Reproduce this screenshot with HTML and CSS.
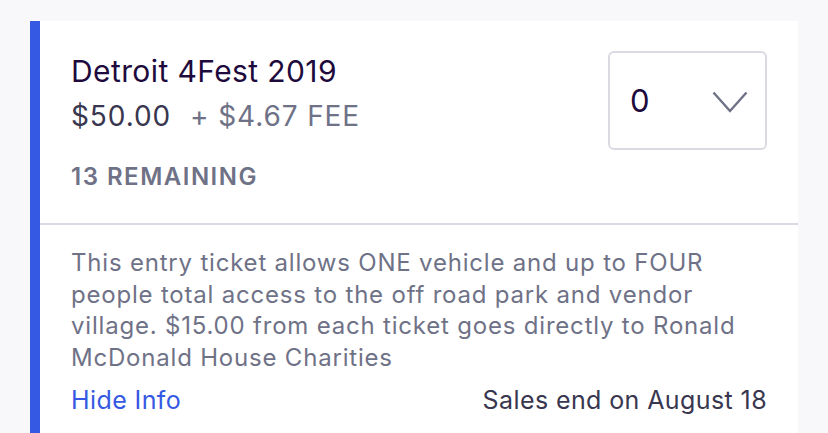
FILE: index.html
```
<!DOCTYPE html>
<html>
<head>
<meta charset="utf-8">
<link rel="stylesheet" href="styles.css">
</head>
<body>
<div class="card">
  <div class="top">
    <div class="info">
      <div class="title">Detroit 4Fest 2019</div>
      <div class="price"><span class="amount">$50.00</span><span class="fee">+ $4.67 FEE</span></div>
      <div class="remaining">13 REMAINING</div>
    </div>
    <div class="select">
      <span class="qty">0</span>
      <svg class="chev" width="36" height="22" viewBox="0 0 36 22"><polyline points="1.5,1.5 18,20 34.5,1.5" fill="none" stroke="#6f7287" stroke-width="2.4"/></svg>
    </div>
  </div>
  <div class="bottom">
    <p class="desc">This entry ticket allows ONE vehicle and up to FOUR people total access to the off road park and vendor village. $15.00 from each ticket goes directly to Ronald McDonald House Charities</p>
    <div class="footer">
      <a class="hide">Hide Info</a>
      <span class="sales">Sales end on August 18</span>
    </div>
  </div>
</div>
</body>
</html>
```
FILE: styles.css
```
html, body {
  margin: 0;
  padding: 0;
  background: #f8f7fa;
  font-family: Inter, "Liberation Sans", sans-serif;
}
.card {
  margin: 21px 0 0 30px;
  width: 758px;
  background: #ffffff;
  border-left: 10px solid #3659e3;
  height: 430px;
}
.top {
  display: flex;
  justify-content: space-between;
  align-items: flex-start;
  padding: 30px 31px 0 31px;
  height: 172px;
  border-bottom: 2px solid #dbdae3;
}
.title {
  margin-top: 2px;
  font-size: 30px;
  line-height: 36px;
  letter-spacing: 0.4px;
  color: #1e0a3c;
}
.price {
  margin-top: 10px;
  font-size: 28px;
  line-height: 34px;
  letter-spacing: 0.9px;
}
.amount {
  color: #39364f;
}
.fee {
  color: #6f7287;
  margin-left: 19px;
}
.remaining {
  margin-top: 29px;
  font-size: 24px;
  line-height: 30px;
  font-weight: 600;
  letter-spacing: 1.5px;
  color: #6f7287;
}
.select {
  box-sizing: border-box;
  width: 159px;
  height: 99px;
  border: 2px solid #dbdae3;
  border-radius: 6px;
  display: flex;
  align-items: center;
  justify-content: space-between;
  padding: 0 17px 0 20px;
}
.qty {
  font-size: 31px;
  color: #1e0a3c;
}
.chev {
  display: block;
  margin-top: 2px;
}
.bottom {
  padding: 22px 31px 0 31px;
}
.desc {
  margin: 0;
  font-size: 24px;
  line-height: 31.5px;
  letter-spacing: 0.8px;
  color: #6f7287;
}
.footer {
  margin-top: 11px;
  display: flex;
  justify-content: space-between;
  font-size: 25px;
  line-height: 32px;
  letter-spacing: 0.4px;
}
.hide {
  color: #3659e3;
}
.sales {
  color: #39364f;
}
```
